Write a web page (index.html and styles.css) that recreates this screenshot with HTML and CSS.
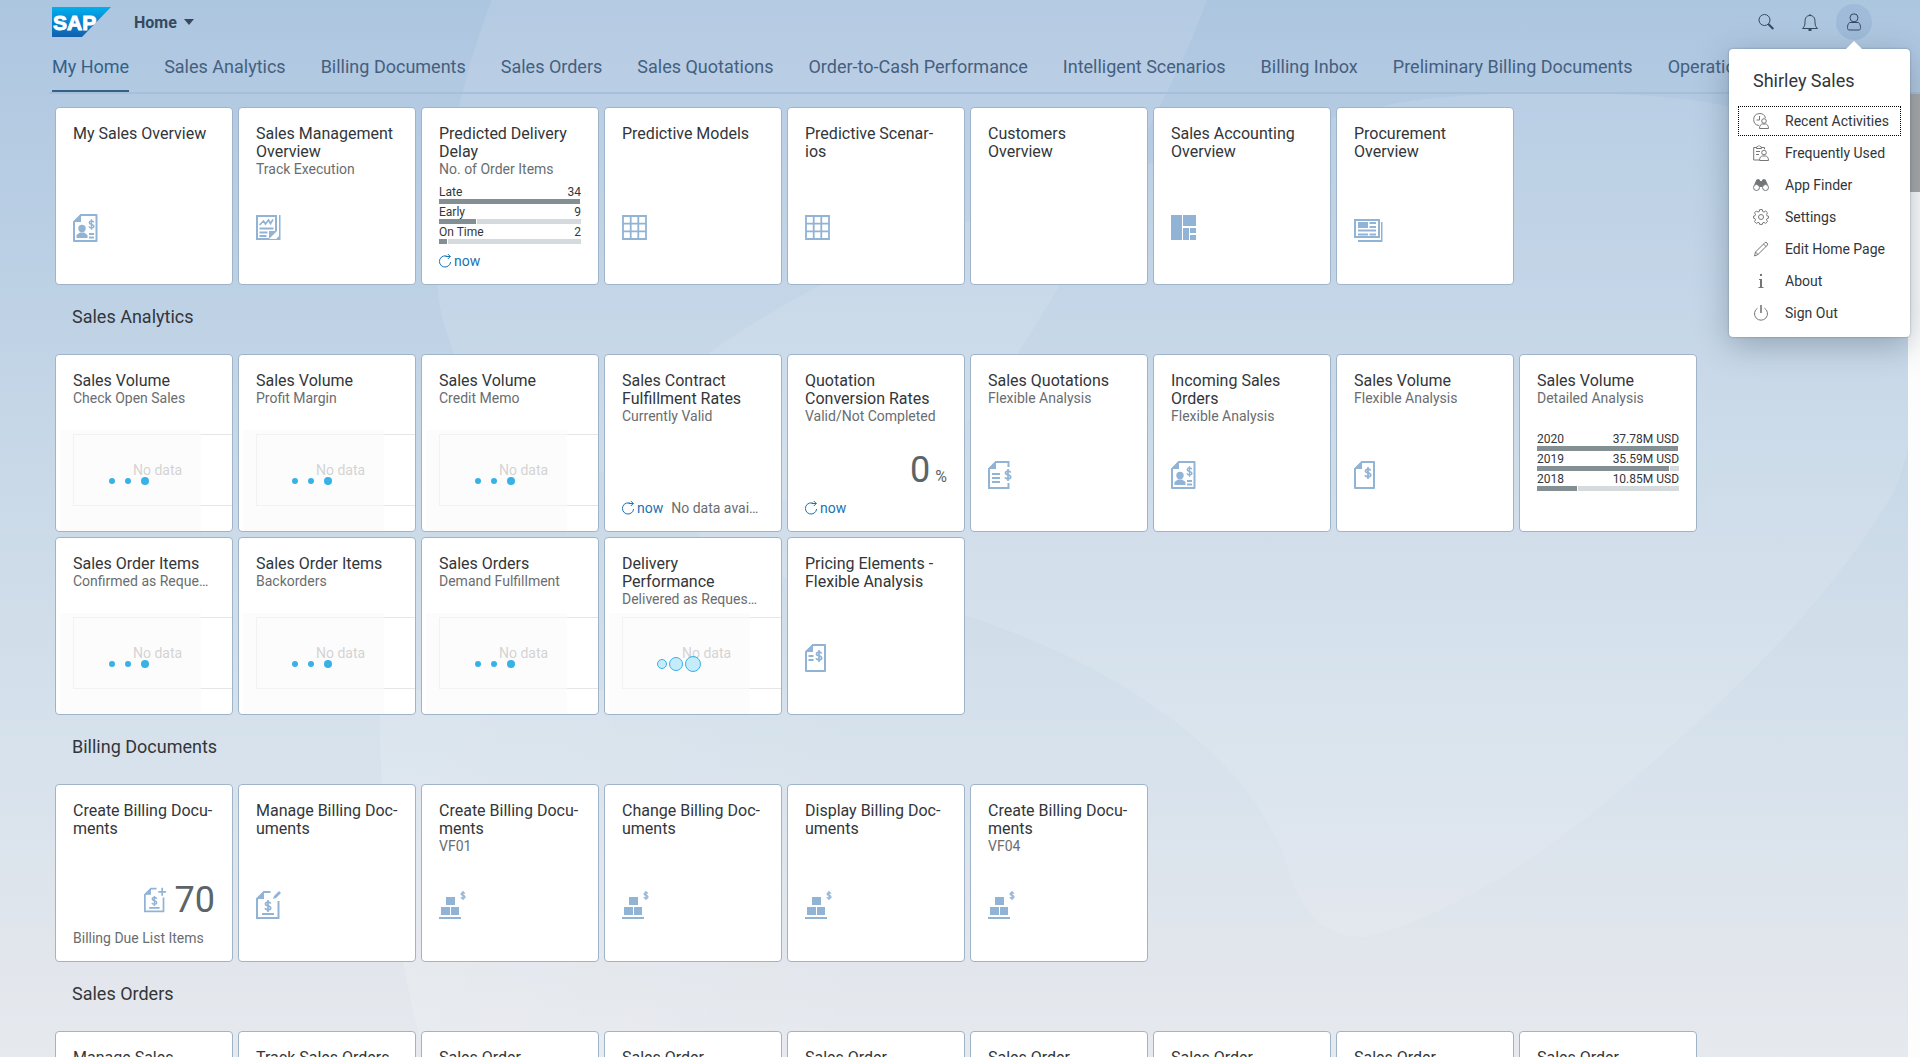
FILE: index.html
```html
<!DOCTYPE html>
<html lang="en">
<head>
<meta charset="utf-8">
<title>Home</title>
<link rel="stylesheet" href="styles.css">
</head>
<body>
<svg class="sprite" aria-hidden="true">
  <defs>
    <linearGradient id="logo-fill" x1="0" y1="0" x2="0" y2="1">
      <stop offset="0" stop-color="#00b0ee"/>
      <stop offset="0.5" stop-color="#0a84cc"/>
      <stop offset="1" stop-color="#1260ae"/>
    </linearGradient>
    <linearGradient id="fade-right">
      <stop offset="0" stop-color="#fff" stop-opacity="0.15"/>
      <stop offset="1" stop-color="#fff" stop-opacity="0"/>
    </linearGradient>
  </defs>
  <symbol id="dollar" viewBox="0 0 8 12">
    <path d="M6.6 3.6C6.4 2.6 5.4 2.1 4 2.1 2.5 2.1 1.5 2.8 1.5 3.9c0 2.700 5.200 1.300 5.200 4.100 0 1.200-1.100 1.900-2.700 1.900S1.400 9.300 1.200 8.200M4 0v12" fill="none" stroke="currentColor" stroke-width="1.700"/>
  </symbol>
  <symbol id="page" viewBox="0 0 30 30">
    <path d="M8 2h15.500v26H1V9z" fill="none" stroke="currentColor" stroke-width="2" stroke-linejoin="round"/>
    <path d="M8 1v8H0z" fill="currentColor"/>
  </symbol>
  <symbol id="page-narrow" viewBox="0 0 30 30">
    <path d="M8 2h12v26H1V9z" fill="none" stroke="currentColor" stroke-width="2" stroke-linejoin="round"/>
    <path d="M8 1v8H0z" fill="currentColor"/>
  </symbol>
  <symbol id="doc-person" viewBox="0 0 30 30">
    <use href="#page"/>
    <use href="#dollar" x="15" y="6" width="7" height="11"/>
    <circle cx="9" cy="15.500" r="3.700" fill="currentColor"/>
    <path d="M3.500 25v-3l3.500-2.500h4l3.500 2.500v3zM16 20h5v2h-5zM16 23.500h5v2h-5z" fill="currentColor"/>
  </symbol>
  <symbol id="doc-dollar" viewBox="0 0 30 30">
    <use href="#page-narrow"/>
    <use href="#dollar" x="10" y="7" width="8" height="12"/>
  </symbol>
  <symbol id="doc-price" viewBox="0 0 30 30">
    <use href="#page-narrow"/>
    <use href="#dollar" x="10" y="7" width="8" height="12"/>
    <path d="M3.500 12h5v2h-5zM3.500 16h5v2h-5z" fill="currentColor"/>
  </symbol>
  <symbol id="doc-quote" viewBox="0 0 30 30">
    <path d="M20.500 7V2H8L1 9v19h19.500v-5" fill="none" stroke="currentColor" stroke-width="2"/>
    <path d="M8 1v8H0zM4 13h8v2H4zM4 17h8v2H4zM4 21h8v2H4z" fill="currentColor"/>
    <use href="#dollar" x="16" y="9" width="8" height="12"/>
  </symbol>
  <symbol id="doc-add" viewBox="0 0 30 30">
    <path d="M14.500 2H8L1 9v19h21.500V12" fill="none" stroke="currentColor" stroke-width="2"/>
    <path d="M8 1v8H0zM6 23h12v2H6z" fill="currentColor"/>
    <path d="M21 1v9M16.500 5.500h9" fill="none" stroke="currentColor" stroke-width="2"/>
    <use href="#dollar" x="8" y="10" width="8" height="12"/>
  </symbol>
  <symbol id="doc-edit" viewBox="0 0 30 30">
    <path d="M14.500 2H8L1 9v19h21.500V11" fill="none" stroke="currentColor" stroke-width="2"/>
    <path d="M8 1v8H0zM6 23h12v2H6zM17 9l1-3 5-5 2 2-5 5z" fill="currentColor"/>
    <use href="#dollar" x="8" y="10" width="8" height="12"/>
  </symbol>
  <symbol id="report" viewBox="0 0 30 30">
    <path d="M13 26H1V3h19v15" fill="none" stroke="currentColor" stroke-width="2"/>
    <path d="M3.500 12l4-4 2 3 3-4 2 3.500L17 6.500" fill="none" stroke="currentColor" stroke-width="1.700"/>
    <path d="M3.500 14.500h14v2h-14zM3.500 18.500h8v2h-8zM3.500 22h7v2h-7zM23 2h1.500v25H13v-1h7l3-3zM13 26v-8h8z" fill="currentColor"/>
  </symbol>
  <symbol id="grid" viewBox="0 0 30 30">
    <path d="M1 3h23v23H1zM8.700 3v23M16.300 3v23M1 10.700h23M1 18.300h23" fill="none" stroke="currentColor" stroke-width="1.800"/>
  </symbol>
  <symbol id="blocks" viewBox="0 0 30 30">
    <path d="M0 2h11v25H0zM12 2h13v11H12zM12 15h6v12h-6zM19 15h6v5h-6zM19 22h6v5h-6z" fill="currentColor"/>
  </symbol>
  <symbol id="news" viewBox="0 0 30 30">
    <path d="M1 7h24v17H1z" fill="none" stroke="currentColor" stroke-width="2"/>
    <path d="M4 9h10v6H4zM15.500 9H22v2h-6.500zM15.500 13H22v2h-6.500zM4 16.500h18v2H4zM4 20.500h10v2H4zM15.500 20.500H22v2h-6.500zM27 9h1.500v20H4v-2h23z" fill="currentColor"/>
  </symbol>
  <symbol id="stock" viewBox="0 0 30 30">
    <path d="M7 7h9v8H7zM2 17h9v8H2zM12 17h8v8h-8zM0 27h22v2H0z" fill="currentColor"/>
    <use href="#dollar" x="21" y="1" width="6" height="9"/>
  </symbol>
  <symbol id="refresh" viewBox="0 0 14 16">
    <path d="M9 3.700A5.600 5.600 0 1 0 11.600 9M6.500 3.500h4.800M8.800 1l2.500 2.500-2.500 2.500" fill="none" stroke="currentColor" stroke-width="1"/>
  </symbol>
</svg>

<div class="app">
  <svg class="backdrop" viewBox="0 0 1920 1057" preserveAspectRatio="none" aria-hidden="true">
    <path d="M492 0C460 80 440 180 437 285 440 320 450 340 460 370L640 500H880C950 460 1010 370 1060 285 1110 200 1170 100 1207 0z" fill="#fff" opacity="0.100"/>
    <path d="M1380 107C1450 88 1660 88 1730 107 1850 150 1960 330 1895 490 1830 600 1740 690 1620 790 1540 860 1440 920 1365 937 1320 937 1300 910 1285 860 1250 760 1130 670 970 617L700 560V360C820 270 1000 190 1380 107z" fill="#fff" opacity="0.100"/>
    <path d="M380 690C378 820 395 950 425 1057H900V690z" fill="url(#fade-right)"/>
  </svg>

  <header class="shell">
    <a class="logo" href="#" aria-label="SAP">
      <svg width="59" height="30" viewBox="0 0 59 30" aria-hidden="true">
        <path d="M0 0h59L30 30H0z" fill="url(#logo-fill)"/>
        <text class="logo-text" x="1" y="23">SAP</text>
      </svg>
    </a>
    <button class="home" type="button">Home<span class="caret"></span></button>
    <div class="tools">
      <button class="tool" type="button" aria-label="Search">
        <svg width="18" height="18" viewBox="0 0 18 18"><circle cx="7.500" cy="7" r="5.500"/><path d="M11.300 11l5 5" stroke-width="2"/></svg>
      </button>
      <button class="tool" type="button" aria-label="Notifications">
        <svg width="18" height="18" viewBox="0 0 18 18"><path d="M1.500 15.500h15c-2-2-2.500-3-2.500-7 0-4-2-6-5-6s-5 2-5 6c0 4-.5 5-2.500 7zM9 1v1.500"/><path d="M7.500 17h3"  stroke-width="2"/></svg>
      </button>
      <div class="user">
        <button class="tool active" type="button" aria-label="Shirley Sales" aria-expanded="true">
          <svg width="18" height="18" viewBox="0 0 18 18"><circle cx="9" cy="4.800" r="4"/><path d="M4.500 9.500h9c1.500 1.500 2 3 2 5 0 1.500-.5 2.500-1.500 2.500H4c-1 0-1.500-1-1.500-2.500 0-2 .5-3.500 2-5z"/></svg>
        </button>
        <div class="popover">
          <h2 class="popover-title">Shirley Sales</h2>
          <ul class="menu">
            <li><button class="menu-item focused" type="button"><svg width="16" height="16" viewBox="0 0 16 16"><path d="M6 12.500A6 6 0 1 1 12.500 5M6.500 3v4H3.500"/><circle cx="11" cy="8" r="2.300"/><path d="M6.500 15.500c0-3 1.500-4.500 3-4.500h3c1.500 0 3 1.500 3 4.500z"/></svg>Recent Activities</button></li>
            <li><button class="menu-item" type="button"><svg width="16" height="16" viewBox="0 0 16 16"><path d="M6 15H.7V2.500H3.500M8.500 2.500h3V4M3.500 3.500V2L5 1.500 6 .5l1 1L8.500 2v1.500zM3 6.500h4M3 9.500h3"/><circle cx="11" cy="7.500" r="2.300"/><path d="M6.500 15.500c0-3 1.500-4.500 3-4.500h3c1.500 0 3 1.500 3 4.500z"/></svg>Frequently Used</button></li>
            <li><button class="menu-item" type="button"><svg width="16" height="16" viewBox="0 0 16 16"><circle cx="3.500" cy="10.500" r="3"/><circle cx="12.500" cy="10.500" r="3"/><path class="solid" d="M1 8l2.500-5.500L5.500 2 7 3v1h2V3l1.500-1 2 .5L15 8l-2.500-.7L9.500 9v1h-3V9l-3-1.700z"/></svg>App Finder</button></li>
            <li><button class="menu-item" type="button"><svg width="16" height="16" viewBox="0 0 16 16"><path d="M6.700.6h2.600l.4 1.900 1.300.6 1.700-1.100 1.800 1.800-1 1.700.5 1.300 1.500.4v1.900l-1.500.5-.5 1.300 1 1.700-1.800 1.800-1.700-1-1.300.5-.4 1.500H6.700l-.4-1.500-1.300-.5-1.700 1-1.800-1.800 1-1.700L2 9.600.5 9.100V7.200L2 6.800l.5-1.300-1-1.700L3.300 2 5 3.100l1.300-.6z"/><circle cx="8" cy="8" r="2.500"/></svg>Settings</button></li>
            <li><button class="menu-item" type="button"><svg width="16" height="16" viewBox="0 0 16 16"><path d="M1.500 15l1-4L12 1.500c1-1 3.500 1.500 2.500 2.500L5 13.500zM10.500 3l2.700 2.700M2.500 11L5 13.500"/></svg>Edit Home Page</button></li>
            <li><button class="menu-item" type="button"><svg width="16" height="16" viewBox="0 0 16 16"><path class="solid" d="M7 1h2v2H7zM6 6h3v8h1.500v1h-5v-1H7V7H6z"/></svg>About</button></li>
            <li><button class="menu-item" type="button"><svg width="16" height="16" viewBox="0 0 16 16"><path d="M4.500 3.200a6.500 6.500 0 1 0 7 0"/><path d="M8 0v8" stroke-width="1.600"/></svg>Sign Out</button></li>
          </ul>
        </div>
      </div>
    </div>
  </header>

  <nav class="tabs">
    <a class="tab selected" href="#">My Home</a>
    <a class="tab" href="#">Sales Analytics</a>
    <a class="tab" href="#">Billing Documents</a>
    <a class="tab" href="#">Sales Orders</a>
    <a class="tab" href="#">Sales Quotations</a>
    <a class="tab" href="#">Order-to-Cash Performance</a>
    <a class="tab" href="#">Intelligent Scenarios</a>
    <a class="tab" href="#">Billing Inbox</a>
    <a class="tab" href="#">Preliminary Billing Documents</a>
    <a class="tab" href="#">Operations</a>
  </nav>

  <div class="body">
    <main class="content">
      <section class="group">
        <div class="tiles">
          <a class="tile" href="#"><h3>My Sales Overview</h3><svg class="icon"><use href="#doc-person"/></svg></a>
          <a class="tile" href="#"><h3>Sales Management Overview</h3><p>Track Execution</p><svg class="icon"><use href="#report"/></svg></a>
          <a class="tile" href="#"><h3>Predicted Delivery Delay</h3><p>No. of Order Items</p>
            <div class="bars">
              <div class="bar-row"><span>Late</span><span>34</span><div class="bar"><i style="width:100%"></i></div></div>
              <div class="bar-row"><span>Early</span><span>9</span><div class="bar"><i style="width:27%"></i></div></div>
              <div class="bar-row"><span>On Time</span><span>2</span><div class="bar"><i style="width:6%"></i></div></div>
            </div>
            <div class="foot"><span class="now"><svg width="14" height="16"><use href="#refresh"/></svg>now</span></div></a>
          <a class="tile" href="#"><h3>Predictive Models</h3><svg class="icon"><use href="#grid"/></svg></a>
          <a class="tile" href="#"><h3>Predictive Scenar&shy;ios</h3><svg class="icon"><use href="#grid"/></svg></a>
          <a class="tile" href="#"><h3>Customers Overview</h3></a>
          <a class="tile" href="#"><h3>Sales Accounting Overview</h3><svg class="icon"><use href="#blocks"/></svg></a>
          <a class="tile" href="#"><h3>Procurement Overview</h3><svg class="icon"><use href="#news"/></svg></a>
        </div>
      </section>

      <section class="group">
        <h2 class="group-title">Sales Analytics</h2>
        <div class="tiles">
          <a class="tile" href="#"><h3>Sales Volume</h3><p>Check Open Sales</p><div class="chart"><span class="empty">No data</span><div class="busy"><i></i><i></i><i></i></div></div></a>
          <a class="tile" href="#"><h3>Sales Volume</h3><p>Profit Margin</p><div class="chart"><span class="empty">No data</span><div class="busy"><i></i><i></i><i></i></div></div></a>
          <a class="tile" href="#"><h3>Sales Volume</h3><p>Credit Memo</p><div class="chart"><span class="empty">No data</span><div class="busy"><i></i><i></i><i></i></div></div></a>
          <a class="tile" href="#"><h3>Sales Contract Fulfillment Rates</h3><p>Currently Valid</p>
            <div class="foot"><span class="now"><svg width="14" height="16"><use href="#refresh"/></svg>now</span><span class="note">No data available</span></div></a>
          <a class="tile" href="#"><h3>Quotation Conversion Rates</h3><p>Valid/Not Completed</p>
            <div class="figure"><strong>0</strong><span class="unit">%</span></div>
            <div class="foot"><span class="now"><svg width="14" height="16"><use href="#refresh"/></svg>now</span></div></a>
          <a class="tile" href="#"><h3>Sales Quotations</h3><p>Flexible Analysis</p><svg class="icon"><use href="#doc-quote"/></svg></a>
          <a class="tile" href="#"><h3>Incoming Sales Orders</h3><p>Flexible Analysis</p><svg class="icon"><use href="#doc-person"/></svg></a>
          <a class="tile" href="#"><h3>Sales Volume</h3><p>Flexible Analysis</p><svg class="icon"><use href="#doc-dollar"/></svg></a>
          <a class="tile" href="#"><h3>Sales Volume</h3><p>Detailed Analysis</p>
            <div class="bars">
              <div class="bar-row"><span>2020</span><span>37.78M USD</span><div class="bar"><i style="width:100%"></i></div></div>
              <div class="bar-row"><span>2019</span><span>35.59M USD</span><div class="bar"><i style="width:94%"></i></div></div>
              <div class="bar-row"><span>2018</span><span>10.85M USD</span><div class="bar"><i style="width:29%"></i></div></div>
            </div>
            <div class="foot"></div></a>
          <a class="tile new-row" href="#"><h3>Sales Order Items</h3><p>Confirmed as Requested</p><div class="chart"><span class="empty">No data</span><div class="busy"><i></i><i></i><i></i></div></div></a>
          <a class="tile" href="#"><h3>Sales Order Items</h3><p>Backorders</p><div class="chart"><span class="empty">No data</span><div class="busy"><i></i><i></i><i></i></div></div></a>
          <a class="tile" href="#"><h3>Sales Orders</h3><p>Demand Fulfillment</p><div class="chart"><span class="empty">No data</span><div class="busy"><i></i><i></i><i></i></div></div></a>
          <a class="tile" href="#"><h3>Delivery Performance</h3><p>Delivered as Requested</p><div class="chart"><span class="empty">No data</span><div class="busy pulsing"><i></i><i></i><i></i></div></div></a>
          <a class="tile" href="#"><h3>Pricing Elements - Flexible Analysis</h3><svg class="icon"><use href="#doc-price"/></svg></a>
        </div>
      </section>

      <section class="group">
        <h2 class="group-title">Billing Documents</h2>
        <div class="tiles">
          <a class="tile" href="#"><h3>Create Billing Docu&shy;ments</h3>
            <div class="figure"><svg class="figure-icon"><use href="#doc-add"/></svg><strong>70</strong></div>
            <div class="foot"><span class="note">Billing Due List Items</span></div></a>
          <a class="tile" href="#"><h3>Manage Billing Doc&shy;uments</h3><svg class="icon"><use href="#doc-edit"/></svg></a>
          <a class="tile" href="#"><h3>Create Billing Docu&shy;ments</h3><p>VF01</p><svg class="icon"><use href="#stock"/></svg></a>
          <a class="tile" href="#"><h3>Change Billing Doc&shy;uments</h3><svg class="icon"><use href="#stock"/></svg></a>
          <a class="tile" href="#"><h3>Display Billing Doc&shy;uments</h3><svg class="icon"><use href="#stock"/></svg></a>
          <a class="tile" href="#"><h3>Create Billing Docu&shy;ments</h3><p>VF04</p><svg class="icon"><use href="#stock"/></svg></a>
        </div>
      </section>

      <section class="group">
        <h2 class="group-title">Sales Orders</h2>
        <div class="tiles">
          <a class="tile" href="#"><h3>Manage Sales</h3></a>
          <a class="tile" href="#"><h3>Track Sales Orders</h3></a>
          <a class="tile" href="#"><h3>Sales Order</h3></a>
          <a class="tile" href="#"><h3>Sales Order</h3></a>
          <a class="tile" href="#"><h3>Sales Order</h3></a>
          <a class="tile" href="#"><h3>Sales Order</h3></a>
          <a class="tile" href="#"><h3>Sales Order</h3></a>
          <a class="tile" href="#"><h3>Sales Order</h3></a>
          <a class="tile" href="#"><h3>Sales Order</h3></a>
        </div>
      </section>
    </main>
    <div class="scrollbar" aria-hidden="true"><div class="thumb"></div></div>
  </div>
</div>
</body>
</html>
```
FILE: styles.css
```css
* {
  box-sizing: border-box;
}

body {
  margin: 0;
  font-family: Roboto, "Liberation Sans", sans-serif;
  font-size: 14px;
  color: #32363a;
}

h2, h3, p, ul {
  margin: 0;
  padding: 0;
  font-weight: 400;
  list-style: none;
}

a {
  color: inherit;
  text-decoration: none;
}

button {
  padding: 0;
  border: 0;
  background: none;
  color: inherit;
  font: inherit;
}

.sprite {
  position: absolute;
  width: 0;
  height: 0;
}

.app {
  position: relative;
  display: flex;
  flex-direction: column;
  height: 100vh;
  overflow: hidden;
  background: linear-gradient(#adc6e0 0%, #bdd1e5 27%, #cbdae8 48%, #d7e2ec 72%, #e2e6ec 91%, #e6e9ee 100%);
}

.backdrop {
  position: absolute;
  inset: 0;
  width: 100%;
  height: 100%;
}

/* Shell header */

.shell {
  position: relative;
  z-index: 2;
  display: flex;
  align-items: center;
  height: 44px;
  padding: 0 48px 0 52px;
  color: #354a5f;
}

.logo {
  display: flex;
  margin-right: 23px;
}

.logo-text {
  fill: #fff;
  stroke: #fff;
  stroke-width: 1px;
  font: 700 21px "Liberation Sans", sans-serif;
}

.home {
  display: flex;
  align-items: center;
  gap: 7px;
  font-size: 16px;
  font-weight: 700;
}

.caret {
  border: 5px solid transparent;
  border-top: 6px solid currentColor;
  border-bottom: 0;
}

.tools {
  display: flex;
  gap: 8px;
  margin-left: auto;
}

.tool {
  display: flex;
  align-items: center;
  justify-content: center;
  width: 36px;
  height: 36px;
  border-radius: 50%;
}

.tool svg,
.menu-item svg {
  fill: none;
  stroke: currentColor;
  stroke-width: 1px;
}

.active {
  background: #9fbbd9;
}

.user {
  position: relative;
}

/* User menu */

.popover {
  position: absolute;
  top: 45px;
  right: -38px;
  width: 181px;
  padding: 17px 9px 9px;
  border-radius: 4px;
  background: #fff;
  box-shadow: 0 0 2px rgba(50, 70, 90, 0.5), 0 8px 32px rgba(50, 70, 90, 0.35);
  color: #32363a;
}

.popover::before {
  content: "";
  position: absolute;
  top: -8px;
  right: 48px;
  border: 8px solid transparent;
  border-top: 0;
  border-bottom-color: #fff;
}

.popover-title {
  margin: 0 15px 10px;
  font-size: 18px;
  line-height: 30px;
}

.menu {
  display: grid;
  gap: 2px;
}

.menu-item {
  display: flex;
  align-items: center;
  gap: 16px;
  width: 100%;
  height: 30px;
  padding-left: 15px;
  white-space: nowrap;
}

.menu-item svg {
  flex: none;
  color: #74777a;
}

.menu-item .solid {
  fill: currentColor;
  stroke: none;
}

.focused {
  outline: 1px dotted #000;
  outline-offset: -1px;
}

/* Section tabs */

.tabs {
  position: relative;
  display: flex;
  gap: 35px;
  height: 50px;
  margin: 0 0 0 49px;
  padding-left: 3px;
  overflow: hidden;
  border-bottom: 2px solid #a6bfda;
  color: #45607e;
  font-size: 18px;
  line-height: 46px;
  white-space: nowrap;
}

.selected {
  border-bottom: 2px solid #346187;
  color: #346187;
}

/* Page body */

.body {
  position: relative;
  display: flex;
  flex: 1;
  min-height: 0;
}

.content {
  flex: 1;
  overflow: hidden;
  padding: 13px 0 0 55px;
}

.scrollbar {
  width: 12px;
  background: #fdfdfd;
}

.thumb {
  height: 98px;
  background: #a8a8a8;
}

.group-title {
  padding: 20px 17px 25px;
  font-size: 18px;
  line-height: 24px;
}

.tiles {
  display: grid;
  grid-template-columns: repeat(auto-fill, 178px);
  gap: 5px;
}

.new-row {
  grid-column-start: 1;
}

.tile {
  display: flex;
  flex-direction: column;
  height: 178px;
  padding: 17px 17px 0;
  overflow: hidden;
  border: 1px solid #9fb3c9;
  border-radius: 4px;
  background: #fff;
}

.tile h3 {
  font-size: 16px;
  line-height: 18px;
}

.tile p {
  overflow: hidden;
  padding-right: 3px;
  color: #6a6d70;
  line-height: 16px;
  text-overflow: ellipsis;
  white-space: nowrap;
}

.icon {
  width: 30px;
  height: 30px;
  margin: auto 0 41px;
  color: #91b3d5;
}

/* Comparison bars */

.bars {
  display: grid;
  margin-top: auto;
}

.bar-row {
  display: grid;
  grid-template-columns: 1fr auto;
  font-size: 12px;
  line-height: 17px;
}

.bar {
  grid-column: 1 / -1;
  height: 5px;
  margin-top: -2px;
  background: #d5dadc;
}

.bar i {
  display: block;
  height: 100%;
  border-right: 1px solid #fff;
  background: #848f94;
}

.foot {
  display: flex;
  gap: 8px;
  height: 40px;
  margin-top: auto;
  line-height: 34px;
}

.bars + .foot,
.figure + .foot {
  margin-top: 0;
}

.now {
  display: flex;
  align-items: center;
  gap: 1px;
  height: 34px;
  color: #1873b4;
}

.note {
  flex: 1;
  overflow: hidden;
  padding-right: 3px;
  color: #6a6d70;
  text-overflow: ellipsis;
  white-space: nowrap;
}

.figure {
  display: flex;
  align-items: baseline;
  justify-content: flex-end;
  gap: 5px;
  margin: auto 0 1px;
  color: #5b6468;
}

.figure strong {
  font-size: 36px;
  font-weight: 400;
  line-height: 40px;
}

.unit {
  font-size: 16px;
  line-height: 16px;
}

.figure-icon {
  align-self: center;
  width: 26px;
  height: 30px;
  color: #91b3d5;
}

/* Loading charts */

.chart {
  position: relative;
  height: 101px;
  margin: auto -17px 0 0;
}

.chart::before {
  content: "";
  position: absolute;
  inset: 4px 0 25px 0;
  border: 1px solid #e6e6e6;
  border-right: 0;
}

.empty {
  position: absolute;
  top: 30px;
  left: 60px;
  color: #999;
  line-height: 20px;
}

.busy {
  position: absolute;
  inset: 0 31px 0 -13px;
  display: flex;
  align-items: center;
  justify-content: center;
  gap: 10px;
  padding-right: 4px;
  background: rgba(250, 250, 250, 0.6);
}

.busy i {
  width: 6px;
  height: 6px;
  border-radius: 50%;
  background: #38b1e6;
}

.busy i:last-child {
  width: 8px;
  height: 8px;
}

.pulsing {
  gap: 2px;
  padding-right: 2px;
}

.pulsing i {
  width: 10px;
  height: 10px;
  border: 1px solid #38b1e6;
  background: rgba(160, 225, 250, 0.6);
}

.pulsing i:nth-child(2) {
  width: 14px;
  height: 14px;
}

.pulsing i:last-child {
  width: 16px;
  height: 16px;
}
```
